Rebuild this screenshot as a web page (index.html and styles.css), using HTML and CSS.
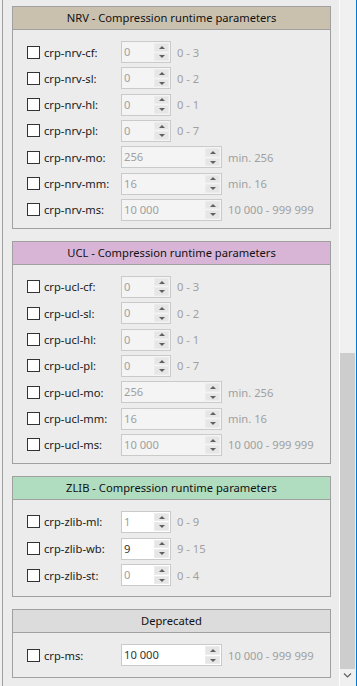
FILE: index.html
```html
<!DOCTYPE html>
<html lang="en">
<head>
    <meta charset="UTF-8">
    <meta name="viewport" content="width=device-width, initial-scale=1.0">
    <title>Compression runtime parameters</title>
    <link rel="stylesheet" href="styles.css">
</head>
<body>
    <div class="window">
        <div class="panel">
            <section class="group group-nrv">
                <h3 class="group-title">NRV - Compression runtime parameters</h3>
                <div class="group-body">
                    <div class="row"><label class="check"><span class="box"></span>crp-nrv-cf:</label><div class="spin"><span class="spin-value">0</span><span class="spin-buttons"><span class="up"></span><span class="down"></span></span></div><span class="range">0 - 3</span></div>
                    <div class="row"><label class="check"><span class="box"></span>crp-nrv-sl:</label><div class="spin"><span class="spin-value">0</span><span class="spin-buttons"><span class="up"></span><span class="down"></span></span></div><span class="range">0 - 2</span></div>
                    <div class="row"><label class="check"><span class="box"></span>crp-nrv-hl:</label><div class="spin"><span class="spin-value">0</span><span class="spin-buttons"><span class="up"></span><span class="down"></span></span></div><span class="range">0 - 1</span></div>
                    <div class="row"><label class="check"><span class="box"></span>crp-nrv-pl:</label><div class="spin"><span class="spin-value">0</span><span class="spin-buttons"><span class="up"></span><span class="down"></span></span></div><span class="range">0 - 7</span></div>
                    <div class="row"><label class="check"><span class="box"></span>crp-nrv-mo:</label><div class="spin spin-wide"><span class="spin-value">256</span><span class="spin-buttons"><span class="up"></span><span class="down"></span></span></div><span class="range">min. 256</span></div>
                    <div class="row"><label class="check"><span class="box"></span>crp-nrv-mm:</label><div class="spin spin-wide"><span class="spin-value">16</span><span class="spin-buttons"><span class="up"></span><span class="down"></span></span></div><span class="range">min. 16</span></div>
                    <div class="row"><label class="check"><span class="box"></span>crp-nrv-ms:</label><div class="spin spin-wide"><span class="spin-value">10 000</span><span class="spin-buttons"><span class="up"></span><span class="down"></span></span></div><span class="range">10 000 - 999 999</span></div>
                </div>
            </section>

            <section class="group group-ucl">
                <h3 class="group-title">UCL - Compression runtime parameters</h3>
                <div class="group-body">
                    <div class="row"><label class="check"><span class="box"></span>crp-ucl-cf:</label><div class="spin"><span class="spin-value">0</span><span class="spin-buttons"><span class="up"></span><span class="down"></span></span></div><span class="range">0 - 3</span></div>
                    <div class="row"><label class="check"><span class="box"></span>crp-ucl-sl:</label><div class="spin"><span class="spin-value">0</span><span class="spin-buttons"><span class="up"></span><span class="down"></span></span></div><span class="range">0 - 2</span></div>
                    <div class="row"><label class="check"><span class="box"></span>crp-ucl-hl:</label><div class="spin"><span class="spin-value">0</span><span class="spin-buttons"><span class="up"></span><span class="down"></span></span></div><span class="range">0 - 1</span></div>
                    <div class="row"><label class="check"><span class="box"></span>crp-ucl-pl:</label><div class="spin"><span class="spin-value">0</span><span class="spin-buttons"><span class="up"></span><span class="down"></span></span></div><span class="range">0 - 7</span></div>
                    <div class="row"><label class="check"><span class="box"></span>crp-ucl-mo:</label><div class="spin spin-wide"><span class="spin-value">256</span><span class="spin-buttons"><span class="up"></span><span class="down"></span></span></div><span class="range">min. 256</span></div>
                    <div class="row"><label class="check"><span class="box"></span>crp-ucl-mm:</label><div class="spin spin-wide"><span class="spin-value">16</span><span class="spin-buttons"><span class="up"></span><span class="down"></span></span></div><span class="range">min. 16</span></div>
                    <div class="row"><label class="check"><span class="box"></span>crp-ucl-ms:</label><div class="spin spin-wide"><span class="spin-value">10 000</span><span class="spin-buttons"><span class="up"></span><span class="down"></span></span></div><span class="range">10 000 - 999 999</span></div>
                </div>
            </section>

            <section class="group group-zlib">
                <h3 class="group-title">ZLIB - Compression runtime parameters</h3>
                <div class="group-body">
                    <div class="row"><label class="check"><span class="box"></span>crp-zlib-ml:</label><div class="spin spin-on"><span class="spin-value">1</span><span class="spin-buttons"><span class="up"></span><span class="down"></span></span></div><span class="range">0 - 9</span></div>
                    <div class="row"><label class="check"><span class="box"></span>crp-zlib-wb:</label><div class="spin spin-on"><span class="spin-value value-set">9</span><span class="spin-buttons"><span class="up"></span><span class="down"></span></span></div><span class="range">9 - 15</span></div>
                    <div class="row"><label class="check"><span class="box"></span>crp-zlib-st:</label><div class="spin spin-on"><span class="spin-value">0</span><span class="spin-buttons"><span class="up"></span><span class="down"></span></span></div><span class="range">0 - 4</span></div>
                </div>
            </section>

            <section class="group group-old">
                <h3 class="group-title">Deprecated</h3>
                <div class="group-body">
                    <div class="row"><label class="check"><span class="box"></span>crp-ms:</label><div class="spin spin-wide spin-on"><span class="spin-value value-set">10 000</span><span class="spin-buttons"><span class="up"></span><span class="down"></span></span></div><span class="range">10 000 - 999 999</span></div>
                </div>
            </section>
        </div>

        <div class="scrollbar">
            <div class="track"></div>
            <div class="thumb"></div>
            <div class="arrow">
                <svg width="16" height="10" viewBox="0 0 16 10"><path d="M4 4.5 L7.5 8 L11 4.5" fill="none" stroke="#606060" stroke-width="1.2"/></svg>
            </div>
        </div>
    </div>
</body>
</html>
```

FILE: styles.css
```css
body {
    margin: 0;
    background-color: #f0f0f0;
    font-family: "Noto Sans", Arial, sans-serif;
    font-size: 11.2px;
    color: #1a1a1a;
}

.window {
    display: flex;
    height: 686px;
    overflow: hidden;
    border-right: 1px solid #0078d7;
}

.panel {
    width: 337px;
    margin-left: 2px;
    padding: 6px 8px 0 9px;
    border-left: 1px solid #a0a0a0;
    background-color: #ececec;
    box-sizing: border-box;
}

.group {
    border: 1px solid #a0a0a0;
    background-color: #ececec;
    margin-bottom: 12px;
}

.group-title {
    margin: 0;
    height: 22px;
    line-height: 22px;
    text-align: center;
    font-size: 11.2px;
    font-weight: normal;
    color: #111;
    border-bottom: 1px solid #a0a0a0;
}

.group-nrv .group-title {
    background-color: #cac0ae;
}

.group-ucl .group-title {
    background-color: #d8b5d7;
}

.group-zlib .group-title {
    background-color: #b0dcc0;
}

.group-old .group-title {
    background-color: #dcdcdc;
}

.group-body {
    display: grid;
    row-gap: 4.33px;
    padding: 11px 0 7px 14px;
}

.group-zlib .group-body {
    row-gap: 4.67px;
    padding-bottom: 10px;
}

.group-old .group-body {
    padding-bottom: 11px;
}

.row {
    display: flex;
    align-items: center;
    height: 22px;
}

.check {
    display: flex;
    align-items: center;
    gap: 4px;
    width: 94px;
}

.box {
    width: 13px;
    height: 13px;
    border: 1px solid #333;
    background-color: #fff;
    box-sizing: border-box;
}

.spin {
    display: flex;
    width: 50px;
    height: 22px;
    border: 1px solid #cacaca;
    background-color: #f4f4f4;
    box-sizing: border-box;
}

.spin-wide {
    width: 101px;
}

.spin-on {
    background-color: #fff;
}

.spin-value {
    flex: 1;
    padding-left: 2px;
    line-height: 19px;
    color: #a0a0a0;
}

.value-set {
    color: #333;
}

.spin-buttons {
    display: flex;
    flex-direction: column;
    gap: 1px;
    width: 15px;
    padding: 1px 1px 1px 0;
}

.spin-buttons span {
    flex: 1;
    display: flex;
    align-items: center;
    justify-content: center;
    background-color: #e6e6e6;
    border: 1px solid #ececec;
    box-sizing: border-box;
}

.spin-buttons .up::before,
.spin-buttons .down::before {
    content: "";
    border-left: 3px solid transparent;
    border-right: 3px solid transparent;
}

.spin-buttons .up::before {
    border-bottom: 3px solid #606060;
}

.spin-buttons .down::before {
    border-top: 3px solid #606060;
}

.range {
    margin-left: 6px;
    color: #a0a0a0;
}

.scrollbar {
    display: flex;
    flex-direction: column;
    width: 16px;
    border-left: 1px solid #fdfdfd;
    background-color: #f0f0f0;
}

.track {
    height: 358px;
}

.thumb {
    width: 15px;
    height: 321px;
    background-color: #cdcdcd;
}

.arrow {
    height: 17px;
    display: flex;
    justify-content: center;
}
```
